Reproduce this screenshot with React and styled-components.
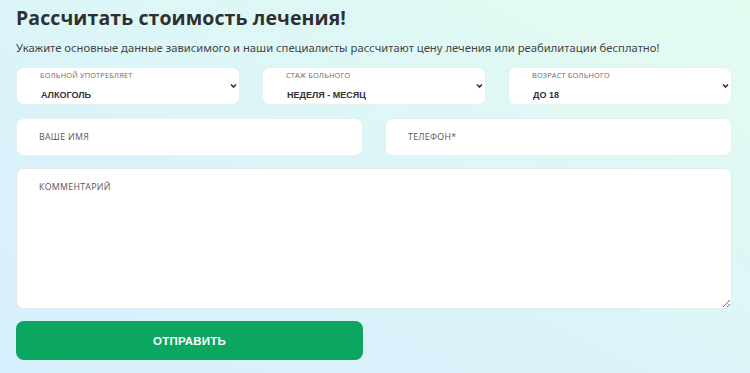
import styled, { createGlobalStyle } from "styled-components";

const GlobalStyle = createGlobalStyle`
  html, body {
    margin: 0;
    padding: 0;
  }
  body {
    font-family: "Noto Sans", "Open Sans", sans-serif;
    color: #333;
  }
`;

const Page = styled.div`
  width: 750px;
  height: 373px;
  box-sizing: border-box;
  padding: 5px 18px 0 16px;
  background: linear-gradient(to bottom left, #e4fcf0 0%, #def7f6 35%, #d9f2fb 70%, #d6effc 100%);
  overflow: hidden;
`;

const Title = styled.h2`
  margin: 0;
  font-family: "Open Sans", sans-serif;
  font-size: 19.5px;
  font-weight: 700;
  line-height: 26px;
  color: #303030;
  letter-spacing: 0.1px;
`;

const Lead = styled.p`
  margin: 9px 0 0;
  font-size: 11.25px;
  line-height: 16px;
  color: #444;
`;

const Form = styled.form`
  display: flex;
  flex-direction: column;
  gap: 12px;
  margin-top: 11px;
`;

const Row = styled.div`
  display: grid;
  grid-template-columns: repeat(${(p) => p.$cols}, 1fr);
  column-gap: 22px;
  margin-bottom: ${(p) => p.$after || 0}px;
`;

const SelectBox = styled.label`
  position: relative;
  display: flex;
  flex-direction: column;
  height: 38px;
  box-sizing: border-box;
  padding: 2px 24px 0 23px;
  background: #fff;
  border-radius: 8px;
  border: 1px solid #e6f1f4;
`;

const Caption = styled.span`
  font-family: "Open Sans", sans-serif;
  font-size: 7.3px;
  line-height: 10px;
  color: #666;
  text-transform: uppercase;
  letter-spacing: 0.2px;
`;

const Select = styled.select`
  appearance: none;
  border: none;
  background: transparent;
  padding: 0 0 0 1px;
  margin-top: 9px;
  height: 12px;
  line-height: 12px;
  font-family: "Liberation Sans", Arial, sans-serif;
  font-size: 9px;
  font-weight: 700;
  color: #333;
  outline: none;
`;

const Chevron = styled.svg`
  position: absolute;
  right: 2px;
  top: 15px;
  width: 7px;
  height: 6px;
`;

const Field = styled.input`
  height: 38px;
  box-sizing: border-box;
  padding: 0 22px;
  border: 1px solid #e6f1f4;
  border-radius: 8px;
  background: #fff;
  font-family: "Open Sans", sans-serif;
  font-size: 8.8px;
  outline: none;
  &::placeholder {
    color: #555;
    text-transform: uppercase;
    letter-spacing: 0.3px;
  }
`;

const Comment = styled.textarea`
  height: 141px;
  box-sizing: border-box;
  padding: 12px 22px;
  border: 1px solid #e2ecef;
  border-radius: 8px;
  background: #fff;
  font-family: "Open Sans", sans-serif;
  font-size: 8.8px;
  outline: none;
  &::placeholder {
    color: #555;
    text-transform: uppercase;
    letter-spacing: 0.3px;
  }
`;

const Submit = styled.button`
  height: 39px;
  border: none;
  border-radius: 8px;
  background: #0ba660;
  color: #fff;
  font-family: "Liberation Sans", Arial, sans-serif;
  font-size: 11.5px;
  font-weight: 700;
  letter-spacing: 0.2px;
  cursor: pointer;
`;

const selects = [
  { caption: "Больной употребляет", value: "АЛКОГОЛЬ" },
  { caption: "Стаж больного", value: "НЕДЕЛЯ - МЕСЯЦ" },
  { caption: "Возраст больного", value: "ДО 18" },
];

export default function App() {
  return (
    <>
      <GlobalStyle />
      <Page>
        <Title>Рассчитать стоимость лечения!</Title>
        <Lead>
          Укажите основные данные зависимого и наши специалисты рассчитают цену лечения или реабилитации бесплатно!
        </Lead>
        <Form onSubmit={(e) => e.preventDefault()}>
          <Row $cols={3} $after={1}>
            {selects.map((s) => (
              <SelectBox key={s.caption}>
                <Caption>{s.caption}</Caption>
                <Select defaultValue={s.value}>
                  <option>{s.value}</option>
                </Select>
                <Chevron viewBox="0 0 7 6">
                  <path d="M1 1.5 L3.5 4 L6 1.5" fill="none" stroke="#333" strokeWidth="1.6" />
                </Chevron>
              </SelectBox>
            ))}
          </Row>
          <Row $cols={2}>
            <Field placeholder="Ваше имя" />
            <Field placeholder="Телефон*" />
          </Row>
          <Comment placeholder="Комментарий" />
          <Row $cols={2}>
            <Submit type="submit">ОТПРАВИТЬ</Submit>
          </Row>
        </Form>
      </Page>
    </>
  );
}
